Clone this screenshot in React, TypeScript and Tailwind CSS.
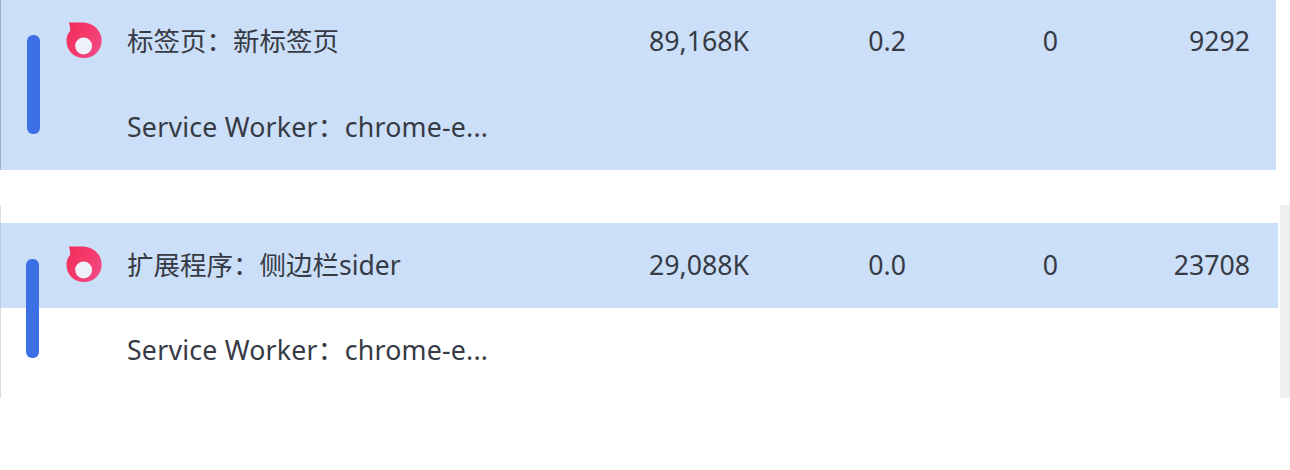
type Process = {
  label: string;
  suffix?: string;
  memory: string;
  cpu: string;
  network: string;
  pid: string;
};

function FlameIcon({ id }: { id: string }) {
  return (
    <svg viewBox="0 0 36 36" className="size-9 shrink-0">
      <defs>
        <linearGradient id={id} x1="0" y1="0.2" x2="1" y2="0.8">
          <stop offset="0" stopColor="#f02f5c" />
          <stop offset="0.5" stopColor="#f5396b" />
          <stop offset="1" stopColor="#f04c8a" />
        </linearGradient>
      </defs>
      <path
        fill={`url(#${id})`}
        d="M2.8 .4H16C27.5 .4 35.6 8.4 35.6 18.4C35.6 28.5 27.8 36 18 36C8.2 36 .5 28.8 .5 19C.5 14.8 1.6 11.7 4.2 8.8C4.2 5.8 3.8 3 2.8 .4Z"
      />
      <circle cx="17.6" cy="24" r="8.5" fill="#eef0fa" />
    </svg>
  );
}

function ProcessRow({ process, iconId }: { process: Process; iconId: string }) {
  return (
    <div className="flex h-[85px] items-start pl-[66px] pt-[22px]">
      <FlameIcon id={iconId} />
      <div className="ml-[25px] mt-px w-[423px] text-[26.5px] leading-9">
        {process.label}
        {process.suffix && <span>{process.suffix}</span>}
      </div>
      <div className="mt-px w-[199px] text-right">{process.memory}</div>
      <div className="mt-px w-[157px] text-right">{process.cpu}</div>
      <div className="mt-px w-[152px] text-right">{process.network}</div>
      <div className="mt-px w-[192px] text-right">{process.pid}</div>
    </div>
  );
}

function WorkerRow() {
  return (
    <div className="flex h-[85px] items-start whitespace-nowrap pl-[127px] pt-6 tracking-[0.22px]">
      <span>Service Worker：chrome-e...</span>
    </div>
  );
}

function GroupBar({ className }: { className: string }) {
  return <div className={`absolute h-[99px] w-[13px] rounded-[6px] bg-[#3d70e5] ${className}`} />;
}

export default function App() {
  return (
    <main className="h-[470px] w-[1290px] overflow-hidden bg-white font-['Noto_Sans','Noto_Sans_CJK_SC',sans-serif] text-[26.7px] leading-9 text-[#363a45]">
      <section className="relative h-[170px] w-[1276px] border-l border-[#a0b0cd] bg-[#ccdff8]">
        <div className="-ml-px">
          <ProcessRow
            iconId="flame-tab"
            process={{ label: "标签页：新标签页", memory: "89,168K", cpu: "0.2", network: "0", pid: "9292" }}
          />
          <WorkerRow />
        </div>
        <GroupBar className="left-[26px] top-[35px]" />
      </section>

      <section className="mt-[35px] flex h-[193px] justify-between">
        <div className="relative w-[1278px] border-l border-[#dddddd] pt-[18px]">
          <div className="-ml-px">
            <div className="h-[85px] border-l border-[#bdcde5] bg-[#ccdff8] pt-px">
              <div className="-ml-px">
                <ProcessRow
                  iconId="flame-extension"
                  process={{
                    label: "扩展程序：侧边栏",
                    suffix: "sider",
                    memory: "29,088K",
                    cpu: "0.0",
                    network: "0",
                    pid: "23708",
                  }}
                />
              </div>
            </div>
            <WorkerRow />
          </div>
          <GroupBar className="left-[25px] top-[54px]" />
        </div>
        <div className="w-[10px] bg-[#efefef]" />
      </section>
    </main>
  );
}
